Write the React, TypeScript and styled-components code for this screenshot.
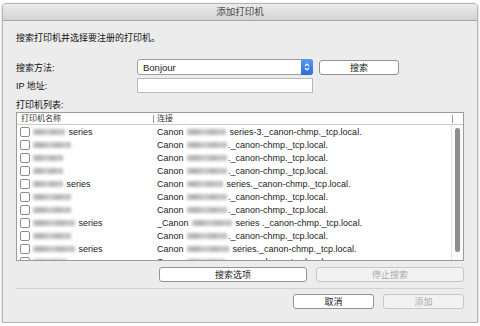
import styled, { createGlobalStyle } from "styled-components"

const Global = createGlobalStyle`
  html, body {
    margin: 0;
    padding: 0;
    background: #fff;
  }
  body {
    font-family: "Liberation Sans", "Noto Sans CJK SC", sans-serif;
    color: #1a1a1a;
  }
`

const Window = styled.div`
  margin: 3px 0 0 2px;
  width: 474px;
  height: 318px;
  border: 1px solid #b4b4b4;
  border-radius: 4px 4px 1px 1px;
  background: #ececec;
  box-shadow: 0 1px 3px rgba(0,0,0,.25);
  display: flex;
  flex-direction: column;
  overflow: hidden;
`

const TitleBar = styled.div`
  height: 16px;
  line-height: 16px;
  text-align: center;
  font-size: 9.5px;
  color: #4a4a4a;
  background: linear-gradient(#ebebeb, #d3d3d3);
  border-bottom: 1px solid #a9a9a9;
`

const Body = styled.div`
  flex: 1;
  padding: 11px 13px 0 13px;
  display: flex;
  flex-direction: column;
`

const Intro = styled.div`
  font-size: 9px;
  line-height: 12px;
  color: #111;
`

const FormGrid = styled.div`
  margin-top: 15px;
  display: grid;
  grid-template-columns: 115px 176px 80px;
  column-gap: 6px;
  row-gap: 3px;
  align-items: center;
`

const Label = styled.div`
  font-size: 9px;
  color: #111;
`

const Select = styled.div`
  height: 16px;
  box-sizing: border-box;
  border: 1px solid #9d9d9d;
  border-radius: 3px;
  background: #fff;
  display: flex;
  align-items: center;
  font-size: 9.5px;
  padding-left: 5px;
  position: relative;
`

const Stepper = styled.div`
  position: absolute;
  right: -1px;
  top: -1px;
  bottom: -1px;
  width: 12px;
  border-radius: 0 3px 3px 0;
  background: linear-gradient(#5b9af2, #2c6ad9);
  display: flex;
  align-items: center;
  justify-content: center;
`

const Input = styled.div`
  height: 15px;
  border: 1px solid #b9b9b9;
  background: #fff;
  box-sizing: border-box;
`

const Button = styled.div<{ disabled?: boolean }>`
  height: 15px;
  box-sizing: border-box;
  border: 1px solid ${p => p.disabled ? '#c6c6c6' : '#939393'};
  border-radius: 3px;
  background: ${p => p.disabled ? '#f2f2f2' : '#fff'};
  color: ${p => p.disabled ? '#ababab' : '#1a1a1a'};
  font-size: 9px;
  display: flex;
  align-items: center;
  justify-content: center;
`

const ListLabel = styled(Label)`
  margin-top: 5px;
`

const List = styled.div`
  margin-top: 1px;
  height: 149px;
  border: 1px solid #9b9b9b;
  background: #fff;
  box-sizing: border-box;
  position: relative;
  overflow: hidden;
`

const Header = styled.div`
  height: 12px;
  display: grid;
  grid-template-columns: 136px 1fr 11px;
  border-bottom: 1px solid #cbcbcb;
  font-size: 8px;
  color: #333;
  align-items: center;
  box-sizing: border-box;
`

const HeadCell = styled.div<{ divider?: boolean }>`
  padding-left: ${p => p.divider ? '3px' : '4px'};
  border-left: ${p => p.divider ? '1px solid #9a9a9a' : 'none'};
  line-height: 8px;
  height: 8px;
`

const Row = styled.div`
  height: 13px;
  display: grid;
  grid-template-columns: 136px 1fr 11px;
  align-items: center;
  font-size: 9px;
  color: #222;
  white-space: nowrap;
`

const NameCell = styled.div`
  display: flex;
  align-items: center;
  padding-left: 3px;
`

const ConnCell = styled.div`
  padding-left: 4px;
  overflow: hidden;
  display: flex;
  align-items: center;
`

const Check = styled.span`
  display: inline-block;
  width: 8px;
  height: 8px;
  border: 1px solid #8c8c8c;
  border-radius: 2px;
  background: #fff;
  margin-right: 2px;
`

/* redacted model names in the screenshot: a smeared grey patch */
const Blur = styled.span<{ w: number }>`
  display: inline-block;
  width: ${p => p.w}px;
  height: 6px;
  margin: 0 1px;
  background: linear-gradient(90deg, #c4c4c4, #b0b0b0 20%, #cdcdcd 45%, #b4b4b4 65%, #c8c8c8 85%, #bdbdbd);
  filter: blur(1.5px);
  flex-shrink: 0;
`

const ScrollTrack = styled.div`
  position: absolute;
  right: 0;
  top: 12px;
  bottom: 0;
  width: 11px;
  border-left: 1px solid #e3e3e3;
  background: #fafafa;
`

const Thumb = styled.div`
  position: absolute;
  left: 3px;
  top: 3px;
  height: 124px;
  width: 5px;
  border-radius: 3px;
  background: #8d8d8d;
`

const ButtonRow = styled.div`
  margin-top: 6px;
  display: flex;
  justify-content: flex-end;
  gap: 9px;
`

const Separator = styled.div`
  margin-top: 6px;
  border-top: 1px solid #d2d2d2;
`

const WideButton = styled(Button)`
  width: 148px;
`

const SmallButton = styled(Button)`
  width: 81px;
`

const FooterRow = styled(ButtonRow)`
  margin-top: 5px;
`

type Printer = {
  name: number
  series?: boolean
  prefix?: string
  conn: number
  tail: string
}

const printers: Printer[] = [
  { name: 32, series: true, conn: 39, tail: 'series-3._canon-chmp._tcp.local.' },
  { name: 38, conn: 40, tail: '._canon-chmp._tcp.local.' },
  { name: 30, conn: 40, tail: '._canon-chmp._tcp.local.' },
  { name: 30, conn: 40, tail: '._canon-chmp._tcp.local.' },
  { name: 30, series: true, conn: 36, tail: 'series._canon-chmp._tcp.local.' },
  { name: 38, conn: 40, tail: '._canon-chmp._tcp.local.' },
  { name: 38, conn: 40, tail: '._canon-chmp._tcp.local.' },
  { name: 42, series: true, prefix: '_Canon', conn: 40, tail: 'series ._canon-chmp._tcp.local.' },
  { name: 38, conn: 40, tail: '._canon-chmp._tcp.local.' },
  { name: 42, series: true, conn: 42, tail: 'series._canon-chmp._tcp.local.' },
  { name: 34, conn: 38, tail: '._canon-chmp._tcp.local.' },
]

const Arrows = () => (
  <svg width="6" height="10" viewBox="0 0 6 10">
    <path d="M1 4 L3 2 L5 4 M1 6 L3 8 L5 6" fill="none" stroke="#fff" strokeWidth="1.1" />
  </svg>
)

export default function App() {
  return (
    <>
      <Global />
      <Window>
        <TitleBar>添加打印机</TitleBar>
        <Body>
          <Intro>搜索打印机并选择要注册的打印机。</Intro>
          <FormGrid>
            <Label>搜索方法:</Label>
            <Select>
              Bonjour
              <Stepper><Arrows /></Stepper>
            </Select>
            <Button>搜索</Button>
            <Label>IP 地址:</Label>
            <Input />
            <div />
          </FormGrid>
          <ListLabel>打印机列表:</ListLabel>
          <List>
            <Header>
              <HeadCell>打印机名称</HeadCell>
              <HeadCell divider>连接</HeadCell>
              <HeadCell divider />
            </Header>
            {printers.map((p, i) => (
              <Row key={i}>
                <NameCell>
                  <Check />
                  <Blur w={p.name} />
                  {p.series && <span>&nbsp;series</span>}
                </NameCell>
                <ConnCell>
                  <span>{p.prefix || 'Canon'}&nbsp;</span>
                  <Blur w={p.conn} />
                  <span>{p.tail.startsWith('.') ? '' : '\u00a0'}{p.tail}</span>
                </ConnCell>
                <div />
              </Row>
            ))}
            <ScrollTrack><Thumb /></ScrollTrack>
          </List>
          <ButtonRow>
            <WideButton>搜索选项</WideButton>
            <WideButton disabled>停止搜索</WideButton>
          </ButtonRow>
          <Separator />
          <FooterRow>
            <SmallButton>取消</SmallButton>
            <SmallButton disabled>添加</SmallButton>
          </FooterRow>
        </Body>
      </Window>
    </>
  )
}
